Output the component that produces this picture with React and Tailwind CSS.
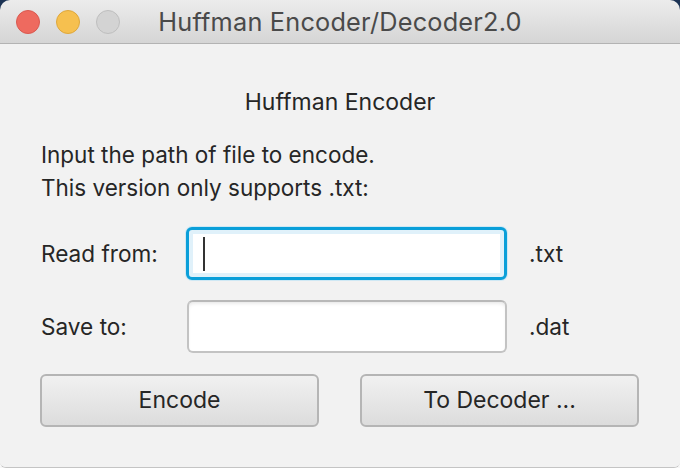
export default function App() {
  const font = { fontFamily: 'Inter, "Liberation Sans", sans-serif' };
  return (
    <div className="w-[680px] h-[468px] bg-[linear-gradient(to_bottom,#1b3354_50%,#f7f7f7_50%)]" style={font}>
      <div className="w-[680px] h-[468px] flex flex-col rounded-t-[10px] rounded-b-[6px] overflow-hidden border-b border-[#c4c4c4]">
        <div className="relative h-[44px] shrink-0 flex items-center bg-[linear-gradient(to_bottom,#ececec,#d5d5d5)] border-b border-[#b3b3b3]">
          <div className="flex items-center gap-[16px] pl-[16px]">
            <span className="w-[24px] h-[24px] rounded-full bg-[#ee6a5f] border border-[#d95950]" />
            <span className="w-[24px] h-[24px] rounded-full bg-[#f6c04f] border border-[#dea73c]" />
            <span className="w-[24px] h-[24px] rounded-full bg-[#d3d3d3] border border-[#bebebe]" />
          </div>
          <div className="absolute inset-0 flex items-center justify-center text-[25.3px] text-[#4a4a4a] tracking-[0.2px]">
            Huffman Encoder/Decoder2.0
          </div>
        </div>
        <div className="flex-1 bg-[#f2f2f2] flex flex-col px-[40px] text-[#262626]">
          <div className="mt-[43px] h-[30px] leading-[30px] text-center text-[23px]">Huffman Encoder</div>
          <div className="mt-[21px] text-[22.5px] leading-[33px] pl-[1px]">
            <div>Input the path of file to encode.</div>
            <div>This version only supports .txt:</div>
          </div>
          <div className="mt-[23px] grid grid-cols-[146px_321px_auto] items-center gap-y-[20px]">
            <div className="text-[22.6px] pl-[1px]">Read from:</div>
            <div className="h-[53px] rounded-[6px] border-[3px] border-[#0a9fd9] bg-white shadow-[inset_0_0_0_4px_#e0f1fa,0_0_0_1px_#cfe8f4] flex items-center pl-[14px]">
              <span className="w-[2px] h-[34px] bg-[#333]" />
            </div>
            <div className="pl-[22px] text-[22.6px]">.txt</div>
            <div className="text-[22.6px] pl-[1px]">Save to:</div>
            <div className="h-[53px] ml-[1px] rounded-[6px] border-2 border-[#c3c3c3] border-t-[#b8b8b8] bg-white shadow-[inset_0_3px_4px_-2px_rgba(0,0,0,0.12)]" />
            <div className="pl-[22px] text-[22.6px]">.dat</div>
          </div>
          <div className="mt-[21px] flex justify-between pr-[1px]">
            <button className="w-[279px] h-[53px] rounded-[6px] border-2 border-[#b5b5b5] bg-[linear-gradient(to_bottom,#f1f1f1,#dcdcdc)] text-[23px] text-[#262626]">Encode</button>
            <button className="w-[279px] h-[53px] rounded-[6px] border-2 border-[#b5b5b5] bg-[linear-gradient(to_bottom,#f1f1f1,#dcdcdc)] text-[23px] text-[#262626]">To Decoder ...</button>
          </div>
        </div>
      </div>
    </div>
  );
}
